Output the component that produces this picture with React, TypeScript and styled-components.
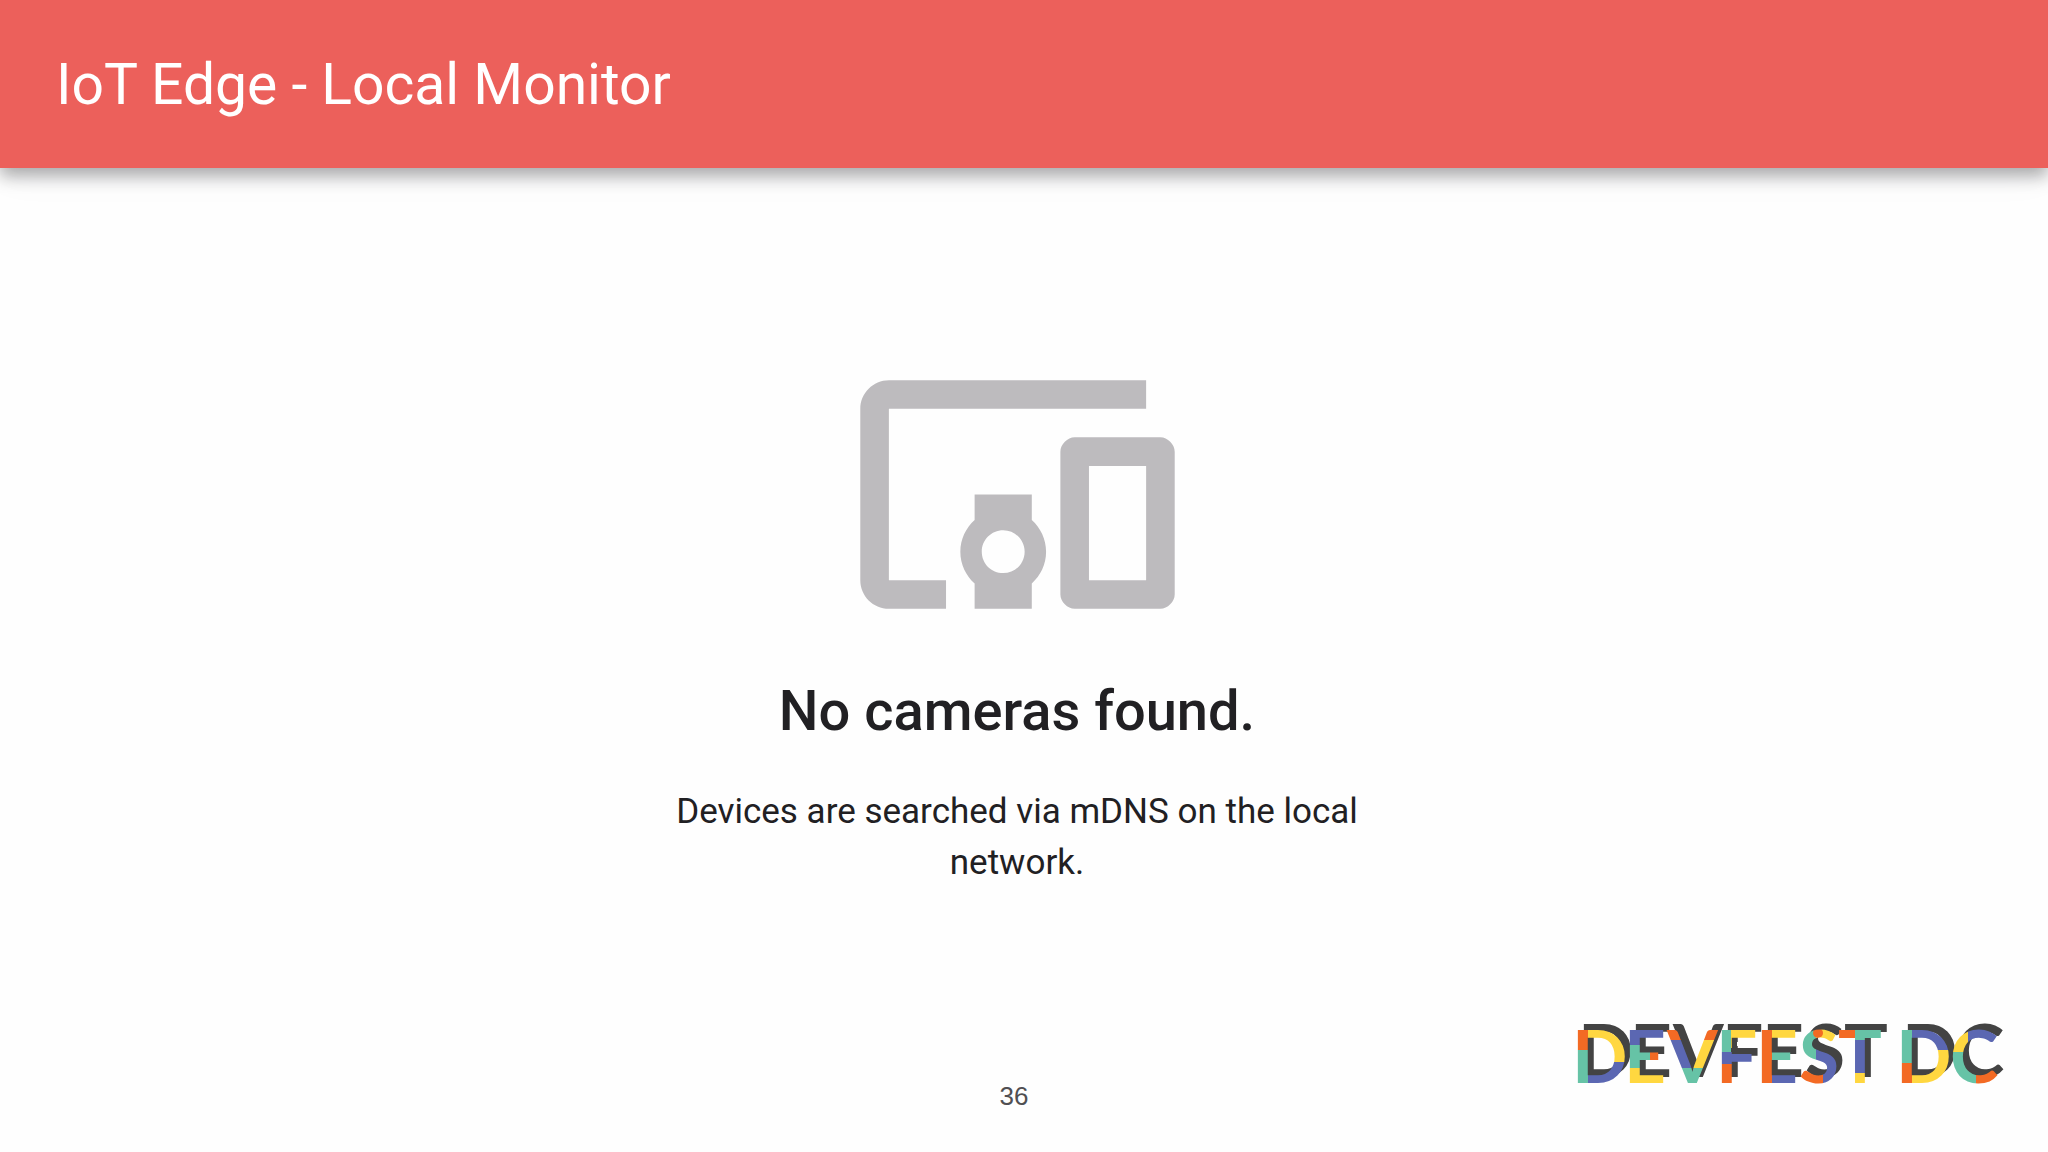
import React from "react";
import styled, { createGlobalStyle } from "styled-components";
import { MdDevicesOther } from "react-icons/md";

const GlobalStyle = createGlobalStyle`
  * { box-sizing: border-box; }
  body { margin: 0; background: #fefefe; color: #212023; font-family: Roboto, "Liberation Sans", sans-serif; }
  h1, h2, p { margin: 0; }
`;

const Page = styled.div`
  display: flex;
  flex-direction: column;
  min-height: 100vh;
`;

const AppBar = styled.header`
  display: flex;
  align-items: center;
  height: 168px;
  padding: 2px 56px 0;
  background: #ec605b;
  color: #fff;
  box-shadow: 0 8px 16px rgba(0, 0, 0, 0.32), 0 4px 40px rgba(40, 20, 80, 0.05);
`;

const Title = styled.h1`
  font-size: 57px;
  font-weight: 400;
  line-height: 64px;
`;

const EmptyState = styled.main`
  flex: 1;
  display: flex;
  flex-direction: column;
  align-items: center;
  padding: 155px 14px 0 0;
  text-align: center;
`;

const DevicesIcon = styled(MdDevicesOther)`
  width: 343px;
  height: 343px;
  color: #bdbbbe;
`;

const Heading = styled.h2`
  margin-top: 13px;
  font-size: 56px;
  font-weight: 500;
  line-height: 64px;
`;

const Message = styled.p`
  max-width: 720px;
  margin-top: 43px;
  font-size: 35px;
  line-height: 51px;
`;

const Footer = styled.footer`
  display: grid;
  grid-template-columns: 1fr auto 1fr;
  align-items: end;
  padding: 0 38px 48px 18px;
`;

const PageNumber = styled.span`
  grid-column: 2;
  color: #504f52;
  font-family: "Liberation Sans", Arial, sans-serif;
  font-size: 26px;
  line-height: 16px;
`;

const Logo = styled.svg`
  display: block;
  justify-self: end;
  width: 440px;
  height: 86px;
  overflow: visible;
`;

const LogoText = styled.text`
  font-family: Lato, sans-serif;
  font-size: 73px;
  font-weight: 700;
  filter: drop-shadow(6px -6px 0 #434343);
`;

const C = {
  orange: "#f36a24",
  teal: "#66c3a6",
  yellow: "#ffd740",
  blue: "#5b67b2",
};

type Block = [string, number, number, number, number];

const blocks: Block[] = [
  // D
  [C.orange, 0, 0, 18, 32], [C.teal, 0, 32, 18, 48], [C.yellow, 18, 0, 38, 44], [C.blue, 18, 44, 38, 36],
  // E
  [C.blue, 56, 0, 40, 27], [C.teal, 56, 27, 24, 23], [C.orange, 80, 27, 16, 20], [C.yellow, 56, 50, 40, 30],
  // V
  [C.orange, 96, 0, 53, 22], [C.blue, 96, 22, 26, 28], [C.yellow, 122, 22, 27, 28], [C.teal, 96, 50, 53, 30],
  // F
  [C.teal, 149, 0, 12, 34], [C.yellow, 161, 0, 26, 30], [C.blue, 149, 34, 38, 12], [C.orange, 149, 46, 38, 34],
  // E
  [C.orange, 187, 0, 15, 80], [C.yellow, 202, 0, 26, 28], [C.teal, 202, 28, 26, 22], [C.blue, 202, 50, 26, 30],
  // S
  [C.teal, 228, 0, 18, 46], [C.yellow, 246, 0, 24, 27], [C.blue, 246, 27, 24, 53], [C.orange, 228, 46, 25, 34],
  // T
  [C.orange, 268, 0, 17, 30], [C.teal, 285, 0, 30, 22], [C.blue, 285, 22, 30, 33], [C.yellow, 270, 55, 45, 25],
  // D
  [C.teal, 325, 0, 17, 45], [C.orange, 325, 45, 17, 35], [C.blue, 342, 0, 39, 32], [C.yellow, 342, 32, 39, 48],
  // C
  [C.yellow, 381, 0, 17, 34], [C.blue, 398, 0, 42, 40], [C.teal, 381, 34, 25, 46], [C.orange, 406, 40, 34, 40],
];

function DevFestLogo() {
  return (
    <Logo viewBox="0 0 440 86" role="img" aria-label="DEVFEST DC">
      <defs>
        <pattern id="blocks" patternUnits="userSpaceOnUse" width="440" height="86">
          {blocks.map(([fill, x, y, width, height], i) => (
            <rect key={i} fill={fill} x={x} y={y} width={width} height={height} />
          ))}
          <circle cx="248" cy="15" r="5" fill={C.orange} />
        </pattern>
      </defs>
      <LogoText x="2 54 97 146 186 229 268 310 326 380" y="65" fill="url(#blocks)">
        DEVFEST DC
      </LogoText>
    </Logo>
  );
}

export default function App() {
  return (
    <Page>
      <GlobalStyle />
      <AppBar>
        <Title>IoT Edge - Local Monitor</Title>
      </AppBar>
      <EmptyState>
        <DevicesIcon aria-hidden="true" />
        <Heading>No cameras found.</Heading>
        <Message>Devices are searched via mDNS on the local network.</Message>
      </EmptyState>
      <Footer>
        <PageNumber>36</PageNumber>
        <DevFestLogo />
      </Footer>
    </Page>
  );
}
